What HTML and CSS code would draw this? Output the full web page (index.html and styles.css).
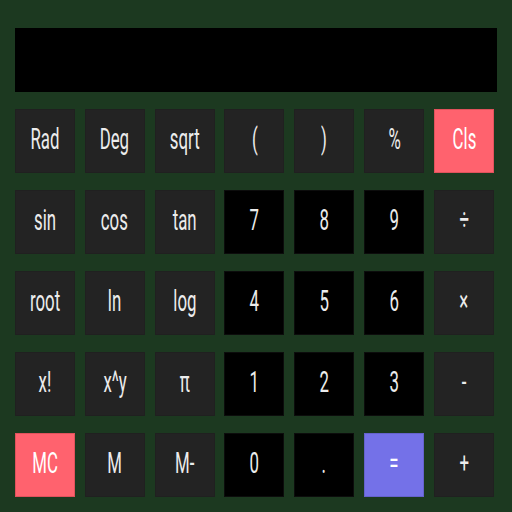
FILE: index.html
```html
<!DOCTYPE html>
<html>
<head>
<meta charset="utf-8">
<link rel="stylesheet" href="styles.css">
</head>
<body>
<div class="calc">
  <div class="display"></div>
  <div class="keys">
    <button class="key"><span>Rad</span></button>
    <button class="key"><span>Deg</span></button>
    <button class="key"><span>sqrt</span></button>
    <button class="key"><span>(</span></button>
    <button class="key"><span>)</span></button>
    <button class="key"><span>%</span></button>
    <button class="key red"><span>Cls</span></button>

    <button class="key"><span>sin</span></button>
    <button class="key"><span>cos</span></button>
    <button class="key"><span>tan</span></button>
    <button class="key num"><span>7</span></button>
    <button class="key num"><span>8</span></button>
    <button class="key num"><span>9</span></button>
    <button class="key"><span>÷</span></button>

    <button class="key"><span>root</span></button>
    <button class="key"><span>ln</span></button>
    <button class="key"><span>log</span></button>
    <button class="key num"><span>4</span></button>
    <button class="key num"><span>5</span></button>
    <button class="key num"><span>6</span></button>
    <button class="key"><span>×</span></button>

    <button class="key"><span>x!</span></button>
    <button class="key"><span>x^y</span></button>
    <button class="key"><span>π</span></button>
    <button class="key num"><span>1</span></button>
    <button class="key num"><span>2</span></button>
    <button class="key num"><span>3</span></button>
    <button class="key"><span>-</span></button>

    <button class="key red"><span>MC</span></button>
    <button class="key"><span>M</span></button>
    <button class="key"><span>M-</span></button>
    <button class="key num"><span>0</span></button>
    <button class="key num"><span>.</span></button>
    <button class="key blue"><span>=</span></button>
    <button class="key"><span>+</span></button>
  </div>
</div>
</body>
</html>
```
FILE: styles.css
```css
html, body {
  margin: 0;
  padding: 0;
  background: #1c3920;
}
body {
  width: 512px;
  height: 512px;
  overflow: hidden;
  font-family: Roboto, "Liberation Sans", sans-serif;
}
.calc {
  padding: 28px 15px 0 15px;
}
.display {
  height: 64px;
  background: #000;
}
.keys {
  margin-top: 17px;
  display: grid;
  grid-template-columns: repeat(7, 60px);
  grid-auto-rows: 64px;
  column-gap: 9.83px;
  row-gap: 17px;
}
.key {
  margin: 0;
  padding: 0 0 5px 0;
  border: 1px solid #202020;
  background: #232323;
  color: #ececec;
  font-family: Roboto, "Liberation Sans", sans-serif;
  font-size: 29px;
  display: flex;
  align-items: center;
  justify-content: center;
  box-sizing: border-box;
}
.key span {
  display: inline-block;
  transform: scaleX(0.58);
  white-space: nowrap;
}
.num {
  background: #000;
  border-color: #0c0c0c;
}
.red {
  background: #ff626e;
  border-color: #e0525c;
  color: #fff;
}
.blue {
  background: #7471e8;
  border-color: #6562cc;
  color: #fff;
}
```
